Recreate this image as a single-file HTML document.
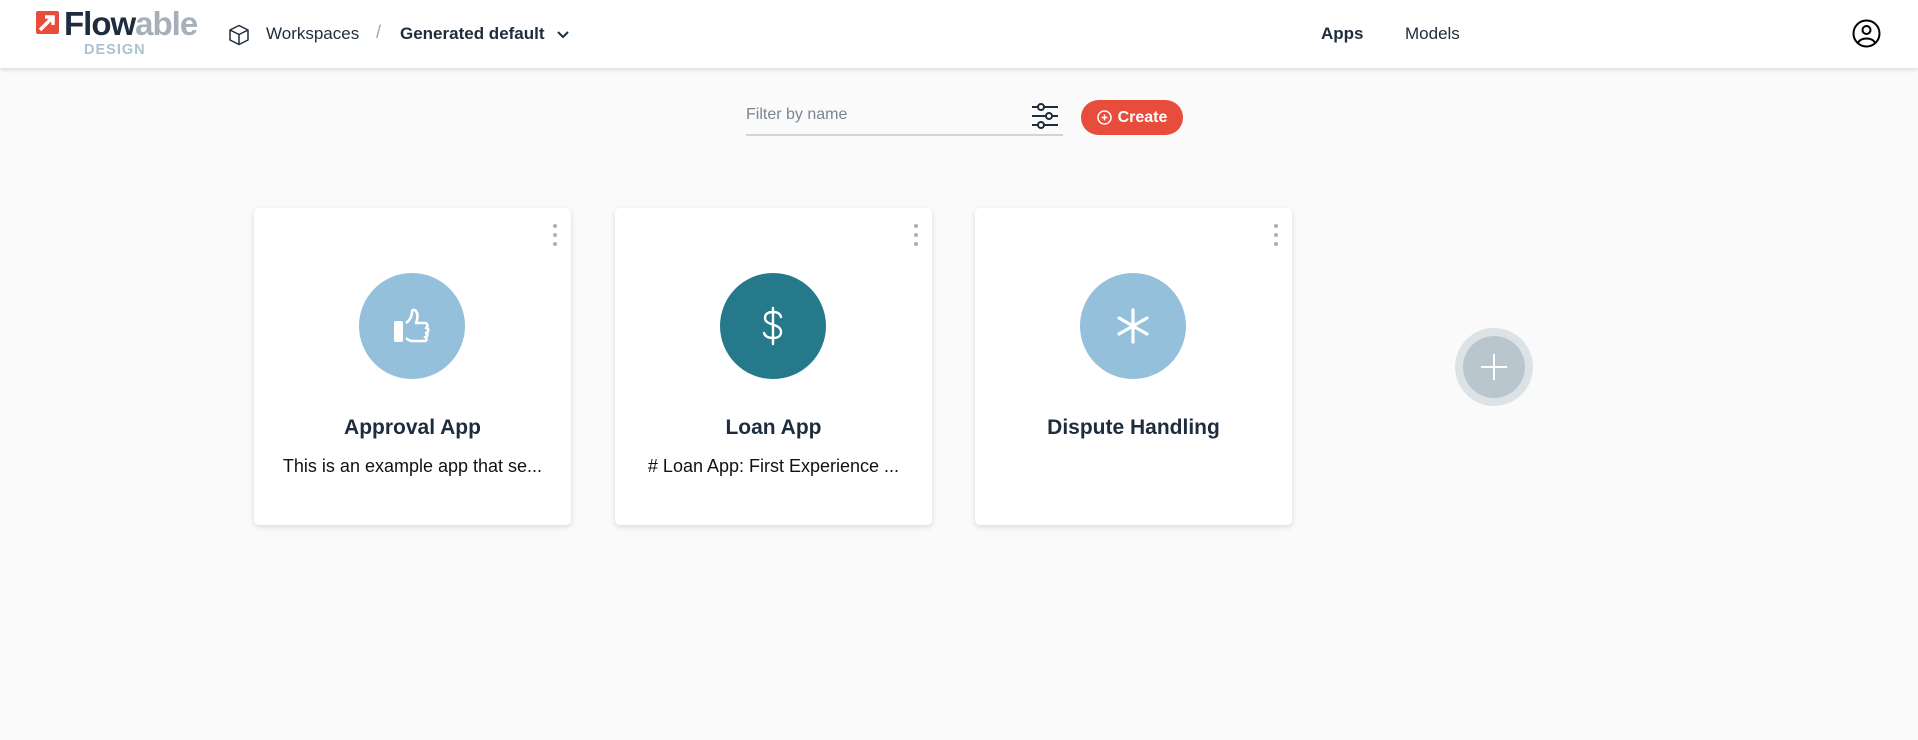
<!DOCTYPE html>
<html><head><meta charset="utf-8"><style>
*{box-sizing:border-box;margin:0;padding:0}
body{width:1918px;height:740px;background:#fafafa;font-family:"Liberation Sans",sans-serif;position:relative;overflow:hidden;color:#1d2d3e}
.hdr{position:absolute;left:0;top:0;width:1918px;height:68px;background:#fff;box-shadow:0 2px 4px rgba(0,0,0,.12)}
.abs{position:absolute}
.card{position:absolute;top:208px;width:317px;height:317px;background:#fff;border-radius:5px;box-shadow:0 2px 6px rgba(0,0,0,.13)}
.dots{position:absolute;right:14px;top:16px;width:4px}
.dots i{display:block;width:4px;height:4px;border-radius:50%;background:#a7b3bb;margin-bottom:5px}
.circ{position:absolute;left:105px;top:65px;width:106px;height:106px;border-radius:50%;display:flex;align-items:center;justify-content:center}
.title{position:absolute;left:0;right:0;top:208px;text-align:center;font-size:21px;font-weight:bold;color:#1d2d3e}
.desc{position:absolute;left:0;right:0;top:248px;text-align:center;font-size:18px;color:#111}
</style></head><body>
<div class="hdr">
  <svg class="abs" style="left:36px;top:11px" width="23" height="23" viewBox="0 0 23 23"><rect width="23" height="23" rx="2" fill="#e84d3c"/><path d="M4 19 L15 8 M9 6 H17 V14" stroke="#fff" stroke-width="3.5" fill="none"/></svg>
  <div class="abs" style="left:64px;top:5px;font-size:33px;font-weight:bold;letter-spacing:-1px;"><span style="color:#1d2d3e">Flow</span><span style="color:#a7b0b8">able</span></div>
  <div class="abs" style="left:84px;top:42px;font-size:14.5px;font-weight:bold;color:#a9c3d2;letter-spacing:1px">DESIGN</div>
  <svg class="abs" style="left:228px;top:24px" width="22" height="22" viewBox="0 0 22 22" fill="none" stroke="#1d2d3e" stroke-width="1.5" stroke-linejoin="round"><path d="M11 1.5 L20 6 V16 L11 20.5 L2 16 V6 Z M2 6 L11 10.5 L20 6 M11 10.5 V20.5"/></svg>
  <div class="abs" style="left:266px;top:24px;font-size:17px;color:#1d2d3e">Workspaces</div>
  <div class="abs" style="left:376px;top:22px;font-size:18px;color:#9aa">/</div>
  <div class="abs" style="left:400px;top:24px;font-size:17px;font-weight:bold;color:#1d2d3e">Generated default</div>
  <svg class="abs" style="left:556px;top:30px" width="14" height="10" viewBox="0 0 14 10"><path d="M2 2 L7 7 L12 2" stroke="#1d2d3e" stroke-width="2" fill="none"/></svg>
  <div class="abs" style="left:1321px;top:24px;font-size:17px;font-weight:bold;color:#1d2d3e">Apps</div>
  <div class="abs" style="left:1405px;top:24px;font-size:17px;color:#1d2d3e">Models</div>
  <svg class="abs" style="left:1852px;top:19px" width="29" height="29" viewBox="0 0 29 29" fill="none" stroke="#000" stroke-width="2"><circle cx="14.5" cy="14.5" r="13"/><circle cx="14.5" cy="11" r="4"/><path d="M6 24 C8 18 21 18 23 24"/></svg>
</div>
<div class="abs" style="left:746px;top:106px;font-size:16px;color:#7a8590">Filter by name</div>
<div class="abs" style="left:746px;top:134px;width:317px;height:2px;background:#cfd6db"></div>
<svg class="abs" style="left:1031px;top:103px" width="28" height="26" viewBox="0 0 28 26" fill="none" stroke="#1d2d3e" stroke-width="2"><path d="M1 4 H27 M1 13 H27 M1 22 H27"/><circle cx="10" cy="4" r="3" fill="#fafafa"/><circle cx="18" cy="13" r="3" fill="#fafafa"/><circle cx="10" cy="22" r="3" fill="#fafafa"/></svg>
<div class="abs" style="left:1081px;top:100px;width:102px;height:35px;border-radius:18px;background:#e84d3c;color:#fff;font-size:16px;font-weight:bold;display:flex;align-items:center;justify-content:center;gap:6px">
<svg width="15" height="15" viewBox="0 0 15 15" fill="none" stroke="#fff" stroke-width="1.5"><circle cx="7.5" cy="7.5" r="6.5"/><path d="M7.5 4.5 V10.5 M4.5 7.5 H10.5"/></svg>Create</div>

<div class="card" style="left:254px"><div class="dots"><i></i><i></i><i></i></div>
<div class="circ" style="background:#94c0dc"><svg width="42" height="42" viewBox="0 0 42 42"><rect x="3" y="16" width="9" height="21" rx="2" fill="#fff"/><path d="M15 33 C18 36 20 36 24 36 H34 C36 36 36 33 34 32 C37 32 37 28 35 28 C38 27 38 23 35 23 C37 22 37 18 34 18 H25 C27 13 27 9 25 6 C23 4 21 5 21 7 C21 12 18 16 15 18" fill="none" stroke="#fff" stroke-width="2.6" stroke-linejoin="round"/></svg></div>
<div class="title">Approval App</div><div class="desc">This is an example app that se...</div></div>

<div class="card" style="left:615px"><div class="dots"><i></i><i></i><i></i></div>
<div class="circ" style="background:#25798a"><svg width="26" height="40" viewBox="0 0 26 40" fill="none" stroke="#fff" stroke-width="2.4" stroke-linecap="round"><path d="M13 2 V38 M21 11 C20 7 17 6 13 6 C8 6 5 8 5 12 C5 20 21 17 21 26 C21 30 18 32 13 32 C8 32 5 30 4 27"/></svg></div>
<div class="title">Loan App</div><div class="desc"># Loan App: First Experience ...</div></div>

<div class="card" style="left:975px"><div class="dots"><i></i><i></i><i></i></div>
<div class="circ" style="background:#94c0dc"><svg width="34" height="36" viewBox="0 0 34 36" stroke="#fff" stroke-width="3.2" stroke-linecap="round"><path d="M17 2 V34 M3 10 L31 26 M3 26 L31 10"/></svg></div>
<div class="title">Dispute Handling</div></div>

<div class="abs" style="left:1455px;top:328px;width:78px;height:78px;border-radius:50%;background:#dce2e6"></div>
<div class="abs" style="left:1463px;top:336px;width:62px;height:62px;border-radius:50%;background:#b9c6cd"></div>
<svg class="abs" style="left:1480px;top:353px" width="28" height="28" viewBox="0 0 28 28" stroke="#fff" stroke-width="2"><path d="M14 1 V27 M1 14 H27"/></svg>
</body></html>
